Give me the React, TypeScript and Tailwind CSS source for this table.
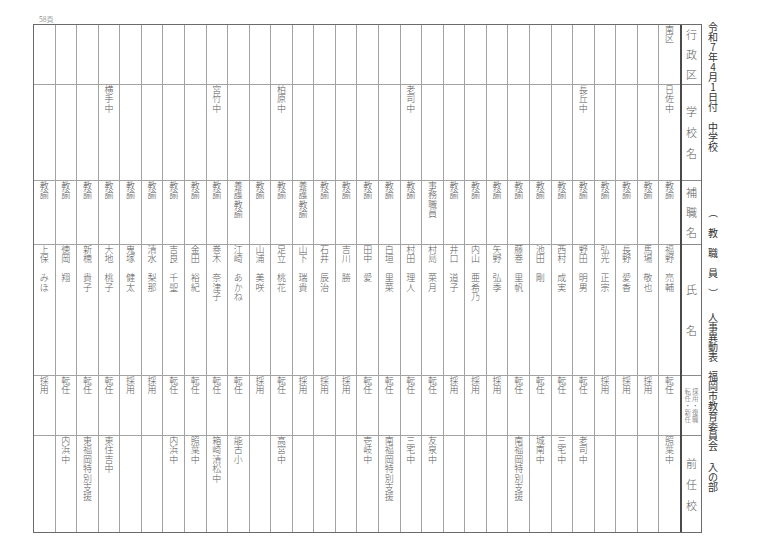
type Col = {
  ku?: string
  school?: string
  post: string
  name: string
  kind: string
  prev?: string
}

// left to right, as printed
const cols: Col[] = [
  { post: '教諭', name: '上保　みほ', kind: '採用' },
  { post: '教諭', name: '徳岡　翔', kind: '転任', prev: '内浜中' },
  { post: '教諭', name: '新穂　貴子', kind: '転任', prev: '東福岡特別支援' },
  { school: '横手中', post: '教諭', name: '大地　桃子', kind: '転任', prev: '東住吉中' },
  { post: '教諭', name: '鬼塚　健太', kind: '採用' },
  { post: '教諭', name: '清水　梨那', kind: '採用' },
  { post: '教諭', name: '吉良　千聖', kind: '転任', prev: '内浜中' },
  { post: '教諭', name: '金田　裕紀', kind: '転任', prev: '照葉中' },
  { school: '宮竹中', post: '教諭', name: '巻木　奈津子', kind: '転任', prev: '箱崎清松中' },
  { post: '養護教諭', name: '江崎　あかね', kind: '転任', prev: '能古小' },
  { post: '教諭', name: '山浦　美咲', kind: '採用' },
  { school: '柏原中', post: '教諭', name: '足立　桃花', kind: '転任', prev: '高宮中' },
  { post: '養護教諭', name: '山下　瑞貴', kind: '採用' },
  { post: '教諭', name: '石井　辰治', kind: '採用' },
  { post: '教諭', name: '吉川　勝', kind: '採用' },
  { post: '教諭', name: '田中　愛', kind: '転任', prev: '壱岐中' },
  { post: '教諭', name: '白垣　里菜', kind: '転任', prev: '南福岡特別支援' },
  { school: '老司中', post: '教諭', name: '村田　理人', kind: '転任', prev: '三宅中' },
  { post: '事務職員', name: '村島　菜月', kind: '転任', prev: '友泉中' },
  { post: '教諭', name: '井口　道子', kind: '採用' },
  { post: '教諭', name: '内山　亜希乃', kind: '採用' },
  { post: '教諭', name: '矢野　弘季', kind: '採用' },
  { post: '教諭', name: '藤巻　里帆', kind: '転任', prev: '南福岡特別支援' },
  { post: '教諭', name: '池田　剛', kind: '転任', prev: '城南中' },
  { post: '教諭', name: '西村　成実', kind: '転任', prev: '三宅中' },
  { school: '長丘中', post: '教諭', name: '野田　明男', kind: '転任', prev: '老司中' },
  { post: '教諭', name: '弘光　正宗', kind: '採用' },
  { post: '教諭', name: '長野　愛香', kind: '採用' },
  { post: '教諭', name: '馬場　敬也', kind: '採用' },
  { ku: '南区', school: '日佐中', post: '教諭', name: '福野　亮輔', kind: '転任', prev: '照葉中' },
]

// stacks characters top to bottom; step = height/leading class for one character
function VText({ text, step, className = '' }: { text: string; step: string; className?: string }) {
  return (
    <div className={`flex flex-col items-center ${className}`}>
      {[...text].map((ch, i) => (
        <span key={i} className={`block text-center ${step}`}>
          {ch === '（' || ch === '）' ? <span className="inline-block rotate-90">{ch}</span> : ch}
        </span>
      ))}
    </div>
  )
}

function Cell({ h, text, last = false }: { h: string; text?: string; last?: boolean }) {
  return (
    <div className={`${h} flex justify-center ${last ? '' : 'border-b border-[#a3a3a3]'}`}>
      {text && <VText text={text} step="h-[9.4px] leading-[9.4px]" className="text-[9px]" />}
    </div>
  )
}

function DataColumn({ c }: { c: Col }) {
  return (
    <div className="flex flex-1 flex-col border-l border-[#a3a3a3] first:border-l-0">
      <Cell h="h-[60px]" text={c.ku} />
      <Cell h="h-[96px]" text={c.school} />
      <Cell h="h-[64px]" text={c.post} />
      <Cell h="h-[131px]" text={c.name} />
      <Cell h="h-[60px]" text={c.kind} />
      <Cell h="flex-1" text={c.prev} last />
    </div>
  )
}

function HeadCell({ h, chars, gap = 'gap-[10px]', last = false }: { h: string; chars: string[]; gap?: string; last?: boolean }) {
  return (
    <div
      className={`${h} flex flex-col items-center justify-center ${gap} text-[11px] leading-[11px] ${
        last ? '' : 'border-b border-[#8a8a8a]'
      }`}
    >
      {chars.map((ch) => (
        <span key={ch}>{ch}</span>
      ))}
    </div>
  )
}

export default function App() {
  return (
    <div className="w-[780px] h-[551px] overflow-hidden bg-white font-light text-[#5a5a5a] font-['Noto_Sans_CJK_JP',sans-serif]">
      <div className="flex items-start pl-[33px] pt-[14px]">
        <div className="flex flex-col">
          <div className="h-[10px] pl-[6px] text-[7px] leading-[10px] text-[#666]">58頁</div>
          <div className="flex h-[509px] border border-[#6b6b6b]">
            <div className="flex w-[646px]">
              {cols.map((c, i) => (
                <DataColumn key={i} c={c} />
              ))}
            </div>
            <div className="flex w-[21px] flex-col border-l-2 border-[#4a4a4a]">
              <HeadCell h="h-[60px]" chars={['行', '政', '区']} gap="gap-[9px]" />
              <HeadCell h="h-[96px]" chars={['学', '校', '名']} />
              <HeadCell h="h-[64px]" chars={['補', '職', '名']} gap="gap-[9px]" />
              <HeadCell h="h-[131px]" chars={['氏', '名']} gap="gap-[30px]" />
              <div className="flex h-[60px] items-center justify-center gap-[1px] border-b border-[#8a8a8a] text-[6.5px]">
                <VText text="転任・新任" step="h-[7.2px] leading-[7.2px]" />
                <VText text="採用・復職" step="h-[7.2px] leading-[7.2px]" />
              </div>
              <HeadCell h="flex-1" chars={['前', '任', '校']} last />
            </div>
          </div>
        </div>
        <div className="ml-[5px] mt-[8px] flex w-[12px] flex-col items-center text-[10px] font-normal text-[#333]">
          <VText text="令和7年4月1日付" step="h-[10px] leading-[10px]" />
          <VText text="中学校" step="h-[10px] leading-[10px]" className="mt-[10px]" />
          <VText text="（教職員）" step="h-[20px] leading-[20px]" className="mt-[51px]" />
          <VText text="人事異動表" step="h-[10px] leading-[10px]" className="mt-[9px]" />
          <VText text="福岡市教育委員会" step="h-[10px] leading-[10px]" className="mt-[9px]" />
          <VText text="入の部" step="h-[10px] leading-[10px]" className="mt-[11px]" />
        </div>
      </div>
    </div>
  )
}
